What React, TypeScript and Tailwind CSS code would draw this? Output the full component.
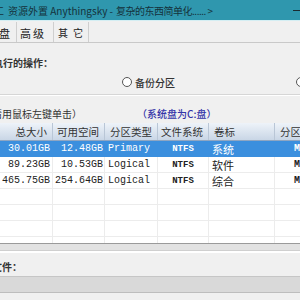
const ROWS = [
  { total: "30.01GB", free: "12.48GB", type: "Primary", fs: "NTFS", label: "系统", selected: true },
  { total: "89.23GB", free: "10.53GB", type: "Logical", fs: "NTFS", label: "软件", selected: false },
  { total: "465.75GB", free: "254.64GB", type: "Logical", fs: "NTFS", label: "综合", selected: false },
];

const COLS = "grid grid-cols-[53px_52px_53px_51px_66px_1fr]";
const CJK = "font-['Noto_Sans_CJK_SC','Noto_Sans',sans-serif]";
const MONO = "font-['Liberation_Mono',monospace]";

function HeaderCell({ children, align = "left" }: { children?: React.ReactNode; align?: string }) {
  return (
    <div
      className={`h-full flex items-center px-[5px] border-r border-[#b9c6d6] whitespace-nowrap overflow-hidden ${
        align === "right" ? "justify-end" : ""
      }`}
    >
      {children}
    </div>
  );
}

function Row({ r }: { r?: (typeof ROWS)[number] }) {
  const sel = r?.selected;
  const line = sel ? "border-[#3b8fde]" : "border-[#ececec]";
  return (
    <div
      className={`${COLS} h-[16px] border-b ${line} ${sel ? "bg-[#3b8fde] text-white" : "bg-white text-[#222]"} text-[10px] leading-[16px]`}
    >
      <div className={`border-r ${line} pr-[2px] text-right ${MONO}`}>{r?.total}</div>
      <div className={`border-r ${line} pr-[1px] text-right ${MONO}`}>{r?.free}</div>
      <div className={`border-r ${line} pl-[3px] ${MONO}`}>{r?.type}</div>
      <div className={`border-r ${line} text-center font-bold ${MONO} text-[9px]`}>{r?.fs}</div>
      <div className={`border-r ${line} pl-[3px] text-[11px] ${CJK}`}>{r?.label}</div>
      <div className={`pl-[19px] font-bold ${MONO}`}>{r ? "MBR" : ""}</div>
    </div>
  );
}

export default function App() {
  return (
    <div className={`w-[300px] h-[300px] overflow-hidden bg-[#f0f0f0] text-[#222] ${CJK}`}>
      {/* 标题栏 */}
      <div className="h-[20px] bg-[#2f97ae] flex items-center whitespace-nowrap text-[10px] text-[#15323c]">
        <span className="ml-[-6px] mr-[4px]">工</span>
        <span>资源外置 Anythingsky - </span>
        <span className="ml-[3px] tracking-[-0.5px]">复杂的东西简单化...... &gt;</span>
        <span className="ml-auto mr-0 w-[7px] h-px bg-[#1a2a30] shrink-0" />
      </div>
      <div className="h-px bg-[#d4eef3]" />

      {/* 选项卡 */}
      <div className="h-[22px] flex items-end border-b border-[#c9c9c9]">
        <div className="flex h-[20px] text-[11px] leading-[22px] text-[#222] whitespace-nowrap">
          <div className="w-[17px] overflow-hidden border-r border-[#cfcfcf] flex justify-end pr-[6px]">盘</div>
          <div className="w-[37px] border-r border-[#cfcfcf] pl-[3px] tracking-[2px]">高级</div>
          <div className="w-[35px] border-r border-[#cfcfcf] pl-[4px] tracking-[5px] text-[10px]">其它</div>
        </div>
      </div>

      {/* 操作 */}
      <div className="mt-[13px] h-[14px] leading-[14px] text-[10px] font-bold text-[#333] whitespace-nowrap">
        <span className="ml-[-7px]">执行的操作：</span>
      </div>
      <div className="mt-[5px] h-[14px] flex items-center text-[10px] text-[#222] whitespace-nowrap">
        <span className="ml-[122px] w-[10px] h-[10px] rounded-full border border-[#555] bg-white shrink-0" />
        <span className="ml-[3px] font-medium text-[#333]">备份分区</span>
        <span className="ml-[121px] w-[10px] h-[10px] rounded-full border border-[#555] bg-white shrink-0" />
      </div>
      <div className="mt-[5px] h-px bg-[#d6d6d6]" />
      <div className="h-px bg-white" />

      {/* 提示 */}
      <div className="mt-[10px] h-[14px] flex items-center text-[10px] whitespace-nowrap">
        <span className="ml-[-8px] text-[#333]">请用鼠标左键单击）</span>
        <span className="ml-[55px] text-[#3434a8] font-medium">（系统盘为C:盘）</span>
      </div>

      {/* 分区表 */}
      <div className="mt-[3px] h-[121px] overflow-hidden bg-white border-b border-[#9a9a9a]">
        <div
          className={`${COLS} h-[18px] bg-gradient-to-b from-[#eef3f9] to-[#c9d6e6] border-b border-[#8fa6c2] text-[10.5px] text-[#333]`}
        >
          <HeaderCell align="right">总大小</HeaderCell>
          <HeaderCell align="right">可用空间</HeaderCell>
          <HeaderCell>分区类型</HeaderCell>
          <HeaderCell align="right">文件系统</HeaderCell>
          <HeaderCell>卷标</HeaderCell>
          <div className="h-full flex items-center pl-[5px] whitespace-nowrap">分区</div>
        </div>
        {ROWS.map((r) => (
          <Row key={r.total} r={r} />
        ))}
        <Row />
        <Row />
        <Row />
        <Row />
      </div>

      {/* 底部 */}
      <div className="h-[6px] bg-[#e2e2e2]" />
      <div className="h-px bg-[#cfcfcf]" />
      <div className="h-[2px] bg-white" />
      <div className="h-[23px] pt-[3px] flex items-center text-[10px] font-bold text-[#333] whitespace-nowrap">
        <span className="ml-[-8px]">文件：</span>
      </div>
      <div className="h-[16px] bg-[#d9d9d9] border-t border-[#c6c6c6]" />
      <div className="h-px bg-[#bdbdbd]" />
      <div className="h-[8px] bg-[#f0f0f0]" />
    </div>
  );
}
